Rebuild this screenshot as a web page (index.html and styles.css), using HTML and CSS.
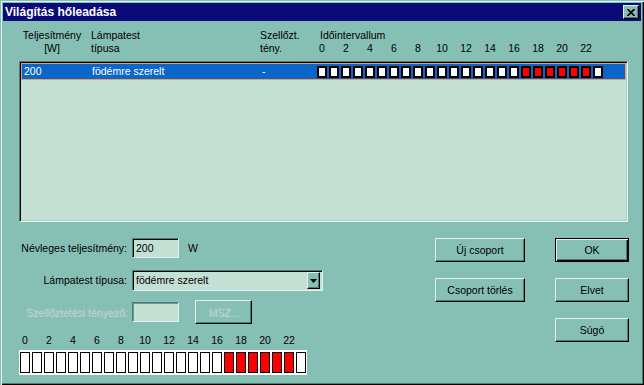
FILE: index.html
```html
<!DOCTYPE html>
<html lang="hu">
<head>
  <meta charset="UTF-8" />
  <meta name="viewport" content="width=device-width, initial-scale=1.0"/>
  <title>Világítás hőleadása</title>
  <link rel="stylesheet" href="styles.css">
</head>
<body>
  <div class="window">
    <!-- Title bar -->
    <div class="titlebar">
      <span class="title">Világítás hőleadása</span>
      <button class="close-btn" aria-label="Bezárás">
        <svg width="8" height="7" viewBox="0 0 8 7"><path d="M0.5 0 L7.5 7 M7.5 0 L0.5 7" stroke="#000" stroke-width="1.7" fill="none"/></svg>
      </button>
    </div>

    <div class="content">
      <!-- List header -->
      <div class="list-head">
        <div class="col-power">Teljesítmény<br>[W]</div>
        <div class="col-type">Lámpatest<br>típusa</div>
        <div class="col-vent">Szellőzt.<br>tény.</div>
        <div class="col-time">
          <div class="time-title">Időintervallum</div>
          <div class="hours">
            <span>0</span><span>2</span><span>4</span><span>6</span><span>8</span><span>10</span>
            <span>12</span><span>14</span><span>16</span><span>18</span><span>20</span><span>22</span>
          </div>
        </div>
      </div>

      <!-- List -->
      <div class="listbox">
        <div class="list-row selected">
          <div class="col-power">200</div>
          <div class="col-type">födémre szerelt</div>
          <div class="col-vent">-</div>
          <div class="cells" id="rowCells"></div>
        </div>
      </div>

      <!-- Bottom -->
      <div class="bottom">
        <div class="form">
          <div class="form-row row-power">
            <label>Névleges teljesítmény:</label>
            <div class="field field-small">200</div>
            <span class="unit">W</span>
          </div>
          <div class="form-row row-type">
            <label>Lámpatest típusa:</label>
            <div class="field combo">
              <span class="combo-text">födémre szerelt</span>
              <span class="combo-btn"><svg width="7" height="4" viewBox="0 0 7 4"><polygon points="0,0 7,0 3.5,4" fill="#000"/></svg></span>
            </div>
          </div>
          <div class="form-row row-vent">
            <label class="disabled">Szellőztetési tényező:</label>
            <div class="field field-small field-disabled"></div>
            <button class="btn btn-msz" disabled>MSZ...</button>
          </div>
          <div class="hours hours-big">
            <span>0</span><span>2</span><span>4</span><span>6</span><span>8</span><span>10</span>
            <span>12</span><span>14</span><span>16</span><span>18</span><span>20</span><span>22</span>
          </div>
          <div class="strip" id="stripCells"></div>
        </div>

        <div class="actions">
          <button class="btn">Új csoport</button>
          <button class="btn btn-default">OK</button>
          <button class="btn">Csoport törlés</button>
          <button class="btn">Elvet</button>
          <button class="btn btn-help">Súgó</button>
        </div>
      </div>
    </div>
  </div>

  <script>
    // hours 17..22 are switched on
    const onHours = [17, 18, 19, 20, 21, 22];

    function fillCells(el, cls) {
      for (let h = 0; h < 24; h++) {
        const c = document.createElement("span");
        c.className = cls + (onHours.includes(h) ? " on" : "");
        el.appendChild(c);
      }
    }

    fillCells(document.getElementById("rowCells"), "cell");
    fillCells(document.getElementById("stripCells"), "strip-cell");
  </script>
</body>
</html>
```

FILE: styles.css
```css
:root {
  --bg: #86bfb4;
  --field: #c4dfd4;
  --light: #e4f2ed;
  --shadow: #4d7d74;
  --title: #0a0a78;
  --select: #0a66c8;
  --focus: #f09a55;
  --disabled: #a2c6be;
}
* {
  box-sizing: border-box;
}
body {
  margin: 0;
  font-family: "Liberation Sans", Arial, sans-serif;
  font-size: 10.5px;
  line-height: 13px;
  color: #000;
  background: var(--bg);
  overflow: hidden;
}
.window {
  width: 644px;
  height: 385px;
  padding: 3px;
  background: var(--bg);
  box-shadow: inset 1px 1px 0 var(--bg), inset 2px 2px 0 var(--light), inset -1px -1px 0 #000, inset -2px -2px 0 var(--shadow);
}

/* title bar */
.titlebar {
  height: 18px;
  background: var(--title);
  display: flex;
  align-items: center;
  justify-content: space-between;
  padding: 0 2px;
}
.title {
  color: #fff;
  font-weight: bold;
  font-size: 12px;
}
.close-btn {
  width: 16px;
  height: 14px;
  padding: 0;
  background: var(--bg);
  border: 1px solid;
  border-color: var(--light) #000 #000 var(--light);
  box-shadow: inset -1px -1px 0 var(--shadow);
  display: flex;
  align-items: center;
  justify-content: center;
}

.content {
  padding: 8px 12px 0 16px;
}

/* list header */
.list-head {
  display: flex;
  padding-left: 2px;
  height: 26px;
}
.col-power {
  width: 70px;
  flex-shrink: 0;
}
.list-head .col-power {
  text-align: center;
  padding-right: 8px;
}
.col-type {
  width: 169px;
  flex-shrink: 0;
}
.col-vent {
  width: 57px;
  flex-shrink: 0;
}
.time-title {
  padding-left: 3px;
}
.hours {
  display: flex;
}
.hours span {
  width: 10px;
  margin-right: 14px;
  display: flex;
  justify-content: center;
  white-space: nowrap;
}

/* list */
.listbox {
  margin-top: 6px;
  width: 609px;
  height: 161px;
  background: var(--field);
  border: 1px solid;
  border-color: var(--shadow) var(--light) var(--light) var(--shadow);
  box-shadow: inset 1px 1px 0 #000, inset -1px -1px 0 #b0d2c9;
}
.list-row {
  display: flex;
  align-items: center;
  height: 17px;
  margin: 1px 0 0 1px;
  width: 605px;
}
.list-row.selected {
  background: var(--select);
  color: #fff;
  border: 1px solid var(--focus);
}
.list-row .col-power {
  width: 69px;
  padding-left: 2px;
}
.list-row .col-type {
  padding-left: 1px;
}
.list-row .col-vent {
  padding-left: 2px;
}
.cells {
  display: flex;
  gap: 2px;
  padding-top: 1px;
}
.cell {
  width: 10px;
  height: 12px;
  border: 2px solid #000;
  background: #fff;
}
.cell.on, .strip-cell.on {
  background: #ff0000;
}

/* bottom area */
.bottom {
  display: flex;
  margin-top: 16px;
}
.form {
  display: flex;
  flex-direction: column;
}
.form-row {
  display: flex;
  align-items: center;
}
.form-row label {
  width: 108px;
  text-align: right;
  margin-right: 5px;
}
.row-power {
  height: 20px;
  margin-bottom: 12px;
}
.row-type {
  height: 21px;
  margin-bottom: 9px;
}
.row-vent {
  height: 24px;
  margin-bottom: 10px;
}
.disabled {
  color: var(--disabled);
  text-shadow: 1px 1px 0 #bcdcd4;
}
.field {
  height: 20px;
  background: var(--field);
  border: 1px solid;
  border-color: var(--shadow) var(--light) var(--light) var(--shadow);
  box-shadow: inset 1px 1px 0 #000;
  padding: 3px 0 0 3px;
}
.field-small {
  width: 47px;
}
.field-disabled {
  box-shadow: inset 1px 1px 0 #6a9a91;
}
.unit {
  margin-left: 9px;
}
.combo {
  width: 191px;
  height: 21px;
  display: flex;
  align-items: center;
  justify-content: space-between;
  padding: 0 2px 0 3px;
}
.combo-btn {
  width: 13px;
  height: 17px;
  background: var(--bg);
  border: 1px solid;
  border-color: var(--light) #000 #000 var(--light);
  box-shadow: inset -1px -1px 0 var(--shadow);
  display: flex;
  align-items: center;
  justify-content: center;
}

.hours-big {
  padding-left: 1px;
  margin-bottom: 3px;
}
.strip {
  width: 288px;
  height: 25px;
  background: #fff;
  padding: 2px 1px;
  display: flex;
  gap: 2px;
}
.strip-cell {
  width: 10px;
  height: 21px;
  border: 1px solid #000;
  background: #fff;
}

/* buttons */
.btn {
  font-family: inherit;
  font-size: 10.5px;
  color: #000;
  padding: 0;
  height: 24px;
  background: var(--bg);
  border: 1px solid;
  border-color: var(--light) #000 #000 var(--light);
  box-shadow: inset -1px -1px 0 var(--shadow);
}
.btn-default {
  border-color: #000;
  box-shadow: inset 1px 1px 0 var(--light), inset -1px -1px 0 #000, inset -2px -2px 0 var(--shadow);
}
.btn-msz {
  width: 57px;
  margin-left: 16px;
  color: var(--disabled);
  text-shadow: 1px 1px 0 #bcdcd4;
}
.actions {
  margin-left: auto;
  display: grid;
  grid-template-columns: 90px 74px;
  grid-auto-rows: 24px;
  column-gap: 30px;
  row-gap: 16px;
  align-self: flex-start;
}
.btn-help {
  grid-column: 2;
}
```
